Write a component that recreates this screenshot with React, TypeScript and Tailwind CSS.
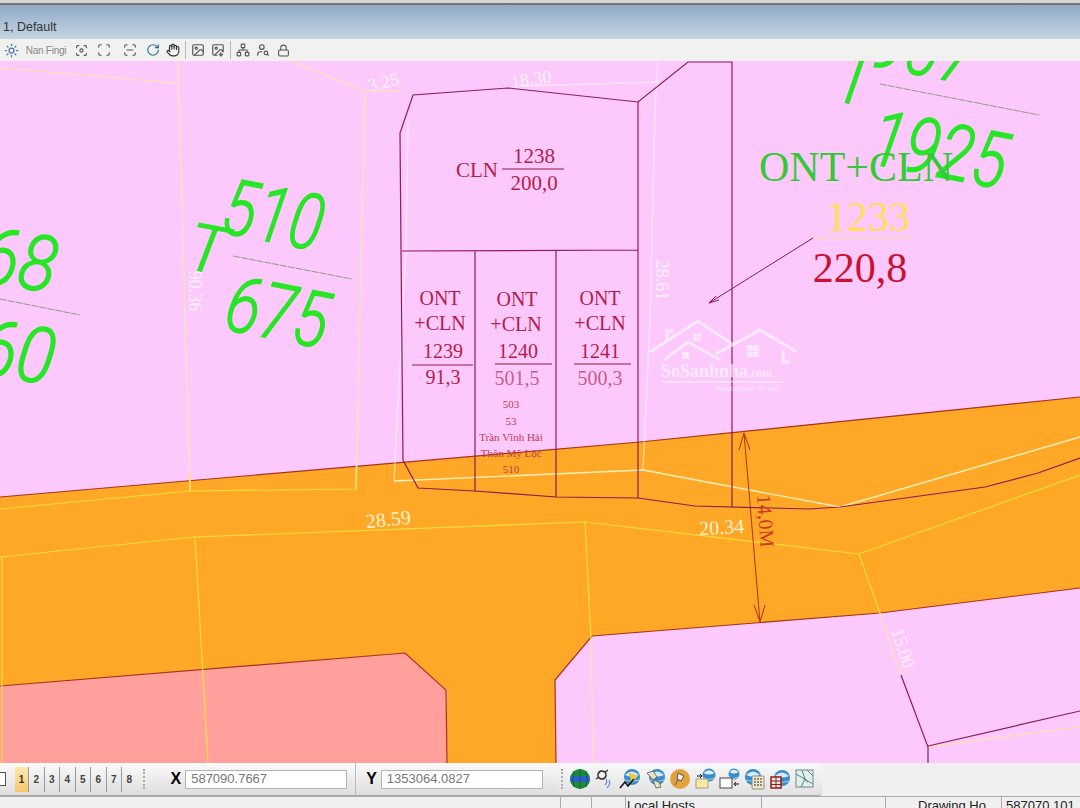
import React from 'react';
import { Sun, Hand, RotateCw, Image, ImageDown, Network, UserSearch, Lock, Scan, ScanLine, Focus } from 'lucide-react';

const serif = { fontFamily: '"Liberation Serif", serif' };
const cad = { fontFamily: 'Roboto, "Liberation Sans", sans-serif', fontStyle: 'italic', fontWeight: 300 };

const PARCEL = '#8e1b52';
const PEACH = '#fddcc4';
const YELLOW = '#ffe23a';
const CREAM = '#fff0b8';

const TopIcon = ({ children, className = 'w-[18px]' }: { children: React.ReactNode; className?: string }) => (
  <span className={`flex h-[18px] items-center justify-center text-[#555] ${className}`}>{children}</span>
);

const Ball = ({ x = 12, y = 10, r = 8 }: { x?: number; y?: number; r?: number }) => (
  <g>
    <circle cx={x} cy={y} r={r} fill="#3a8cc8" />
    <path d={`M${x - r + 1} ${y - 2}q${r - 1} ${-r + 1} ${2 * r - 2} 0q${-r + 1} 3 ${-2 * r + 2} 0z`} fill="#d6ecf8" />
    <path d={`M${x - r + 1} ${y + 3}q${r - 1} 3 ${2 * r - 2} 0`} stroke="#9fd0ee" strokeWidth="1" fill="none" />
  </g>
);

// toolbar pictures, left to right as in the bar
const GisIcons = [
  <g key="earth">
    <circle cx="11" cy="11" r="10" fill="#1d8a3e" />
    <path d="M1.5 8H20.5V14H1.5Z" fill="#2a5fd0" />
    <path d="M11 1V21M5 3Q3 11 5 19M17 3Q19 11 17 19" stroke="#0f5a28" strokeWidth=".8" fill="none" />
  </g>,
  <g key="sensor" fill="none">
    <circle cx="8" cy="7" r="4" stroke="#333" strokeWidth="1.6" transform="rotate(30 8 7)" />
    <path d="M2 11L5 9M11 4L14 2" stroke="#333" strokeWidth="1.4" />
    <path d="M12 11Q14 14 11 17M15 12Q17 16 13 20" stroke="#6a88c8" strokeWidth="1.2" />
  </g>,
  <g key="trace">
    <Ball x={13} y={9} r={8} />
    <path d="M9 4L19 8L13 15Z" fill="#e8c84a" />
    <path d="M1 20L6 14L9 18L15 11" stroke="#111" strokeWidth="1.5" fill="none" />
  </g>,
  <g key="pick">
    <Ball x={13} y={9} r={8} />
    <path d="M3 5L9 3L13 9L9 12ZM9 12L15 14L17 19L12 20Z" fill="#e8e4c0" stroke="#555" strokeWidth=".8" />
  </g>,
  <g key="pin">
    <circle cx="11" cy="11" r="10" fill="#e3a23c" />
    <path d="M9 5L15 8L12 13L8 11ZM9 12L6 17" fill="#f4f0e0" stroke="#555" strokeWidth="1" />
  </g>,
  <g key="export">
    <Ball x={15} y={7} r={6.5} />
    <rect x="2" y="11" width="12" height="9" fill="#fbeaa0" stroke="#888" strokeWidth=".8" />
    <path d="M3 8H8M6 6L8 8L6 10" stroke="#111" strokeWidth="1" fill="none" />
  </g>,
  <g key="import">
    <Ball x={15} y={6} r={5.5} />
    <rect x="1" y="10" width="12" height="10" fill="#fff" stroke="#444" strokeWidth="1" />
    <path d="M20 16H15M17 14L15 16L17 18" stroke="#111" strokeWidth="1" fill="none" />
  </g>,
  <g key="list">
    <Ball x={9} y={9} r={8} />
    <rect x="8" y="8" width="12" height="13" rx="1" fill="#efe8c8" stroke="#777" strokeWidth=".8" />
    <path d="M10 11H18M10 14H18M10 17H18" stroke="#333" strokeWidth="1" strokeDasharray="2 1" />
  </g>,
  <g key="film">
    <Ball x={13} y={10} r={8} />
    <path d="M2 9H12V20H2Z" fill="#f6e8e0" stroke="#8c1c1c" strokeWidth="1.5" />
    <path d="M2 13H12M2 16.5H12M7 9V20" stroke="#8c1c1c" strokeWidth="1" />
  </g>,
  <g key="sheet">
    <rect x="2" y="2" width="17" height="17" fill="#dff0e4" stroke="#667" strokeWidth=".8" />
    <path d="M2 6L19 16M8 2L11 11L7 19M13 2L19 8" stroke="#4a86a8" strokeWidth="1" fill="none" />
    <path d="M9 10L14 14" stroke="#b05050" strokeWidth="1" />
  </g>,
];

function MapLabels() {
  return (
    <>
      {/* green sheet numbers */}
      <g fill="#26e626" stroke="#26e626" strokeWidth="1.3" style={cad}>
        <text fontSize="78" transform="translate(-22 281) rotate(9) scale(.9 1)">68</text>
        <text fontSize="78" transform="translate(-24 373) rotate(9) scale(.9 1)">60</text>
        <text fontSize="78" transform="translate(219 232) rotate(11) scale(.8 1)">510</text>
        <text fontSize="78" transform="translate(222 329) rotate(11) scale(.82 1)">675</text>
        <text fontSize="66" transform="translate(184 268) rotate(11)">T</text>
        <text fontSize="78" transform="translate(832 100) rotate(11) scale(.82 1)">T</text>
        <text fontSize="78" transform="translate(868 65) rotate(11) scale(.82 1)">907</text>
        <text fontSize="78" transform="translate(867 163) rotate(11) scale(.82 1)">1925</text>
      </g>
      <g stroke="#8f9a80" strokeWidth="1" strokeDasharray="7 1">
        <line x1="0" y1="299" x2="80" y2="315" />
        <line x1="233" y1="256" x2="352" y2="279" />
        <line x1="880" y1="84" x2="1039" y2="115" />
      </g>
      {/* big parcel */}
      <g style={serif} textAnchor="middle">
        <text x="856" y="181" fontSize="42" fill="#35c935">ONT+CLN</text>
        <text x="868" y="231" fontSize="42" fill="#ffdf55">1233</text>
        <text x="860" y="282" fontSize="42" fill="#c9102f">220,8</text>
      </g>
      <line x1="815" y1="238" x2="910" y2="238" stroke="#fdd9c0" strokeWidth="1.5" />
      <path d="M813 238L709 303M716 296L709 303L719 300" stroke={PARCEL} strokeWidth="1" fill="none" />
      {/* cut parcels */}
      <g style={serif} fill="#b41d48" fontSize="20" textAnchor="middle">
        <text x="534" y="163" fontSize="21">1238</text>
        <text x="534" y="190" fontSize="21">200,0</text>
        <text x="477" y="177" fontSize="21">CLN</text>
        <text x="440" y="305">ONT</text>
        <text x="440" y="330">+CLN</text>
        <text x="443" y="358">1239</text>
        <text x="443" y="384">91,3</text>
        <text x="517" y="306">ONT</text>
        <text x="516" y="331">+CLN</text>
        <text x="518" y="358">1240</text>
        <text x="517" y="385" opacity=".65">501,5</text>
        <text x="600" y="305">ONT</text>
        <text x="600" y="330">+CLN</text>
        <text x="600" y="358">1241</text>
        <text x="600" y="385" opacity=".65">500,3</text>
      </g>
      <path d="M502 169H564M412 365H473M495 364H552M574 364H631" stroke="#8e1b40" strokeWidth="1" />
      <g style={serif} fill="#c23a50" fontSize="11" textAnchor="middle">
        <text x="511" y="408">503</text>
        <text x="511" y="425">53</text>
        <text x="511" y="441">Trần Vĩnh Hải</text>
        <text x="511" y="457">Thôn Mỹ Lộc</text>
        <text x="511" y="473">510</text>
      </g>
      {/* lengths */}
      <g style={serif} fill="#fff2cf" fontSize="20" textAnchor="middle">
        <text transform="translate(389 526) rotate(-6)">28.59</text>
        <text transform="translate(722 534) rotate(-3)">20.34</text>
      </g>
      <g style={serif} fill="#fff" opacity=".8" fontSize="18" textAnchor="middle">
        <text transform="translate(385 88) rotate(-14)">3.25</text>
        <text transform="translate(532 85) rotate(-8)">18.30</text>
        <text transform="translate(189 291) rotate(90)">90.36</text>
        <text transform="translate(656 280) rotate(90)">28.61</text>
        <text transform="translate(897 650) rotate(72)">15.00</text>
      </g>
      <text transform="translate(757 495) rotate(86)" style={serif} fontSize="20" fill="#d03a1c">14,0M</text>
    </>
  );
}

function Watermark() {
  return (
    <g opacity=".6" fill="none" stroke="#fff" strokeWidth="3">
      <path d="M650 352L698 321L732 344M664 360L688 342L720 360M716 354L760 330L797 352M783 350V362H790" />
      <path d="M667 340V331H674" />
      <g fill="#fff" stroke="none">
        <rect x="693" y="333" width="3.5" height="3.5" />
        <rect x="697.5" y="333" width="3.5" height="3.5" />
        <rect x="693" y="337.5" width="3.5" height="3.5" />
        <rect x="697.5" y="337.5" width="3.5" height="3.5" />
        <rect x="682" y="352" width="7" height="7" />
        <rect x="747" y="345" width="5.5" height="5.5" />
        <rect x="753.5" y="345" width="5.5" height="5.5" />
        <rect x="747" y="351.5" width="5.5" height="5.5" />
        <rect x="753.5" y="351.5" width="5.5" height="5.5" />
        <rect x="661" y="381" width="125" height="1.5" />
        <text x="661" y="377" fontSize="18" fontWeight="700" style={serif}>SoSanhnha<tspan fontSize="12">.com</tspan></text>
        <text x="715" y="391" fontSize="7" style={{ fontFamily: '"Liberation Sans", sans-serif' }}>Great choice for you</text>
      </g>
    </g>
  );
}

function CadMap() {
  return (
    <svg viewBox="0 61 1080 702" className="block h-[702px] w-full shrink-0">
      <rect x="0" y="61" width="1080" height="702" fill="#fdc9fd" />
      {/* road */}
      <path d="M0 497L640 442L1080 397V588L880 613L592 636L555 680L556 763H447V690L405 653L0 686Z" fill="#ffa726" />
      <path d="M0 686L405 653L446 690L447 763H0Z" fill="#ffa09c" />
      <path d="M0 497L640 442L1080 397M1080 588L880 613L592 636L555 680L556 763M0 686L405 653L446 690L447 763" stroke="#a8331c" strokeWidth="1.2" fill="none" />
      {/* old boundaries */}
      <g fill="none" stroke={PEACH} strokeWidth="1.6">
        <path d="M0 68L176 83M178 61L190 490M290 61L365 91L402 91M365 91L356 490M591 638L593 763M880 613L901 675M928 747L1080 727" />
      </g>
      <g fill="none" stroke={YELLOW} strokeWidth="1.2">
        <path d="M0 509L190 491L356 489L356 470M190 491V475M0 557L195 537L585 522L859 554L1080 475M2 557V763M195 537L208 763M585 522L591 638M859 554L880 613" />
      </g>
      <g fill="none" stroke={CREAM} strokeWidth="1.4">
        <path d="M394 481L643 470L840 507L1080 437" />
        <path d="M408 118L406 250L394 481M658 61L655 110L650 320L643 470M520 86L660 82" stroke="#fff" opacity=".5" />
      </g>
      {/* new lots */}
      <g fill="none" stroke={PARCEL} strokeWidth="1.2">
        <path d="M732 507V62H688L638 102L508 88L413 95L400 133L401 250L403 460L418 488L475 491L556 497L638 498L695 506L809 509L840 507L985 487L1038 473L1080 458" />
        <path d="M402 251L638 250M475 251V491M556 250V497M638 102V498" />
        <path d="M901 675L928 747V763M928 746L1080 711" />
      </g>
      {/* road width */}
      <path d="M744 433L760 622M739 450L744 433L750 450M754 605L760 622L765 605" stroke="#b8301c" strokeWidth="1" fill="none" />
      <MapLabels />
      <Watermark />
    </svg>
  );
}

export default function App() {
  return (
    <div className="flex h-[808px] w-[1080px] flex-col overflow-hidden bg-[#f0f0f0]" style={{ fontFamily: '"Liberation Sans", sans-serif' }}>
      {/* window top */}
      <div className="h-[5px] shrink-0 border-b-2 border-[#777] bg-[#d6d6d6]" />
      <div className="flex h-[34px] shrink-0 items-end bg-gradient-to-b from-[#8fa9c6] to-[#c6d6e2] pb-[6px] pl-[3px] text-[12.5px] leading-none text-[#333]">
        1, Default
      </div>
      <div className="flex h-[22px] shrink-0 items-center gap-[2px] bg-[#f1f1ef] pl-[2px]">
        <TopIcon><Sun size={15} className="text-[#4a7aa8]" /></TopIcon>
        <TopIcon className="w-[48px]"><span className="text-[10px] tracking-tight text-[#888]">Nan Fingi</span></TopIcon>
        <TopIcon><Focus size={13} /></TopIcon>
        <TopIcon className="w-[24px]"><Scan size={14} /></TopIcon>
        <TopIcon className="w-[24px]"><ScanLine size={14} /></TopIcon>
        <TopIcon><RotateCw size={14} className="text-[#2b6ca8]" /></TopIcon>
        <TopIcon><Hand size={14} className="text-[#333]" /></TopIcon>
        <span className="mx-[1px] h-[18px] w-px bg-[#bbb]" />
        <TopIcon><Image size={14} /></TopIcon>
        <TopIcon><ImageDown size={14} /></TopIcon>
        <span className="mx-[1px] h-[18px] w-px bg-[#bbb]" />
        <TopIcon><Network size={14} /></TopIcon>
        <TopIcon><UserSearch size={14} /></TopIcon>
        <TopIcon><Lock size={13} /></TopIcon>
      </div>

      <CadMap />

      {/* coordinate bar */}
      <div className="flex h-[33px] shrink-0 items-center bg-[#f0f0f0]">
        <div className="flex h-full w-[558px] shrink-0 items-center border-b border-[#aaa] bg-gradient-to-b from-[#fafafa] to-[#dedede]">
          <span className="ml-[-6px] h-[14px] w-[12px] border border-[#555] bg-white" />
          <span className="ml-[9px] flex h-[25px] w-[13px] items-center justify-center bg-gradient-to-b from-[#ffe9b0] to-[#f7c66a] text-[10px] font-bold text-[#333]">1</span>
          <div className="flex">
            {['2', '3', '4', '5', '6', '7', '8'].map((n) => (
              <span key={n} className="flex h-[25px] w-[15.5px] items-center justify-center border-l border-[#999] text-[10px] font-bold text-[#444]">{n}</span>
            ))}
          </div>
          <span className="ml-[6px] h-[20px] border-l-2 border-dotted border-[#aaa]" />
          <span className="ml-[26px] text-[16px] font-bold text-black">X</span>
          <span className="ml-[4px] flex h-[19px] w-[162px] items-center border border-[#b5b5b5] bg-white pl-[5px] text-[13px] text-[#777]">587090.7667</span>
          <span className="ml-[8px] h-full w-px bg-[#bbb]" />
          <span className="ml-[10px] text-[16px] font-bold text-black">Y</span>
          <span className="ml-[4px] flex h-[19px] w-[162px] items-center border border-[#b5b5b5] bg-white pl-[5px] text-[13px] text-[#777]">1353064.0827</span>
        </div>
        <div className="flex h-full w-[264px] shrink-0 items-center gap-[3px] rounded-br border-b border-[#aaa] bg-gradient-to-b from-[#f8f8f8] to-[#e2e2e2] pl-[3px]">
          <span className="mr-[3px] h-[20px] border-l-2 border-dotted border-[#aaa]" />
          {GisIcons.map((icon) => (
            <svg key={icon.key} viewBox="0 0 22 22" className="h-[22px] w-[22px] shrink-0">{icon}</svg>
          ))}
        </div>
      </div>

      {/* status bar, cut off by the window */}
      <div className="flex h-[12px] shrink-0 overflow-hidden border-t border-[#aaa] bg-[#f0f0f0] text-[13px] leading-[18px] text-[#222]">
        <div className="w-[560px] shrink-0" />
        <div className="w-[32px] shrink-0 border-x border-[#aaa]" />
        <div className="w-[34px] shrink-0 border-r border-[#aaa]" />
        <div className="w-[136px] shrink-0 border-r border-[#aaa] pl-[1px]">Local Hosts</div>
        <div className="w-[124px] shrink-0 border-r border-[#aaa]" />
        <div className="w-[116px] shrink-0 border-r border-[#aaa] pl-[32px]">Drawing Ho</div>
        <div className="pl-[4px]">587070.101</div>
      </div>
    </div>
  );
}
